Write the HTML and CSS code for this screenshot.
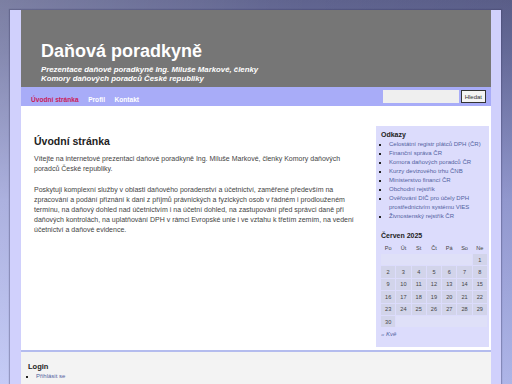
FILE: index.html
```html
<!DOCTYPE html>
<html lang="cs">
<head>
<meta charset="utf-8">
<title>Daňová poradkyně</title>
<link rel="stylesheet" href="styles.css">
</head>
<body>
<div class="page">
  <header class="header">
    <h1 class="site-title">Daňová poradkyně</h1>
    <p class="site-desc">Prezentace daňové poradkyně Ing. Miluše Markové, členky<br>Komory daňových poradců České republiky</p>
  </header>
  <nav class="nav">
    <ul class="menu">
      <li><a class="menu-link active" href="#">Úvodní stránka</a></li>
      <li><a class="menu-link" href="#">Profil</a></li>
      <li><a class="menu-link" href="#">Kontakt</a></li>
    </ul>
    <form class="search">
      <input class="search-input" type="text">
      <button class="search-btn" type="button">Hledat</button>
    </form>
  </nav>
  <div class="main">
    <div class="content">
      <h2 class="page-title">Úvodní stránka</h2>
      <p class="para">Vítejte na internetové prezentaci daňové poradkyně Ing. Miluše Markové, členky Komory daňových poradců České republiky.</p>
      <p class="para">Poskytuji komplexní služby v oblasti daňového poradenství a účetnictví, zaměřené především na zpracování a podání přiznání k dani z příjmů právnických a fyzických osob v řádném i prodlouženém termínu, na daňový dohled nad účetnictvím i na účetní dohled, na zastupování před správci daně při daňových kontrolách, na uplatňování DPH v rámci Evropské unie i ve vztahu k třetím zemím, na vedení účetnictví a daňové evidence.</p>
    </div>
    <aside class="sidebar">
      <h3 class="widget-title">Odkazy</h3>
      <ul class="links">
        <li><a href="#">Celostátní registr plátců DPH (ČR)</a></li>
        <li><a href="#">Finanční správa ČR</a></li>
        <li><a href="#">Komora daňových poradců ČR</a></li>
        <li><a href="#">Kurzy devizového trhu ČNB</a></li>
        <li><a href="#">Ministerstvo financí ČR</a></li>
        <li><a href="#">Obchodní rejstřík</a></li>
        <li><a href="#">Ověřování DIČ pro účely DPH prostřednictvím systému VIES</a></li>
        <li><a href="#">Živnostenský rejstřík ČR</a></li>
      </ul>
      <h3 class="widget-title cal-title">Červen 2025</h3>
      <table class="cal">
        <thead>
          <tr><th>Po</th><th>Út</th><th>St</th><th>Čt</th><th>Pá</th><th>So</th><th>Ne</th></tr>
        </thead>
        <tbody>
          <tr><td class="pad" colspan="6"></td><td>1</td></tr>
          <tr><td>2</td><td>3</td><td>4</td><td>5</td><td>6</td><td>7</td><td>8</td></tr>
          <tr><td>9</td><td>10</td><td>11</td><td>12</td><td>13</td><td>14</td><td>15</td></tr>
          <tr><td>16</td><td>17</td><td>18</td><td>19</td><td>20</td><td>21</td><td>22</td></tr>
          <tr><td>23</td><td>24</td><td>25</td><td>26</td><td>27</td><td>28</td><td>29</td></tr>
          <tr><td>30</td><td class="pad" colspan="6"></td></tr>
        </tbody>
      </table>
      <a class="prev" href="#">« Kvě</a>
    </aside>
  </div>
  <footer class="footer">
    <h3 class="widget-title">Login</h3>
    <ul class="links">
      <li><a href="#">Přihlásit se</a></li>
    </ul>
  </footer>
</div>
</body>
</html>
```
FILE: styles.css
```css
html, body {
  margin: 0;
  padding: 0;
}
body {
  height: 384px;
  overflow: hidden;
  background:
    linear-gradient(to right, rgba(255, 255, 255, 0.18), rgba(255, 255, 255, 0) 60%, rgba(0, 0, 30, 0.06)),
    linear-gradient(to bottom, #5f638e 0px, #6a6f9e 50px, #9aa0d8 200px, #b8c0f4 384px);
  font-family: "Liberation Sans", Arial, sans-serif;
  color: #333;
}
a {
  text-decoration: none;
}
.page {
  width: 470px;
  margin: 10px 0 0 10px;
  padding: 0 10px 0 11px;
  background: #d0d0fc;
  box-shadow: 0 0 1px 1px rgba(60, 60, 100, 0.35);
  height: 380px;
}
.header {
  height: 77px;
  background: #767676;
  padding: 0 20px 4px 20px;
  box-sizing: border-box;
  display: flex;
  flex-direction: column;
  justify-content: flex-end;
}
.site-title {
  margin: 0 0 4px 0;
  font-size: 18px;
  line-height: 20px;
  font-weight: bold;
  color: #fff;
}
.site-desc {
  margin: 0;
  font-size: 7.8px;
  line-height: 9px;
  font-weight: bold;
  font-style: italic;
  color: #fff;
}
.nav {
  height: 19px;
  background: #a8acf8;
  display: flex;
  align-items: center;
  justify-content: space-between;
  padding: 0 5px 0 10px;
}
.menu {
  list-style: none;
  margin: 0;
  padding: 0;
  display: flex;
  gap: 9.5px;
}
.menu-link {
  font-size: 6.6px;
  font-weight: bold;
  color: #fff;
}
.menu-link.active {
  color: #c8205a;
}
.search {
  display: flex;
  align-items: center;
  gap: 2px;
  margin: 0;
}
.search-input {
  width: 76px;
  height: 13px;
  box-sizing: border-box;
  border: none;
  background: #efefef;
  padding: 0;
  margin: 0;
}
.search-btn {
  height: 13px;
  box-sizing: border-box;
  border: 1px solid #333;
  background: #f4f4f4;
  font-family: "Liberation Sans", Arial, sans-serif;
  font-size: 6px;
  color: #333;
  padding: 0 3px;
  margin: 0;
}
.main {
  display: flex;
  background: #fff;
  height: 244px;
  border-bottom: 2px solid #b4bcee;
}
.content {
  flex: 1;
  padding: 29px 13px 0 13px;
}
.page-title {
  margin: 0 0 7px 0;
  font-size: 10.5px;
  line-height: 12px;
  font-weight: bold;
  color: #222;
}
.para {
  margin: 0 0 11px 0;
  font-size: 7px;
  line-height: 10px;
  color: #444;
}
.sidebar {
  width: 113px;
  margin: 20px 2px 3px 0;
  background: #dcdcfc;
  padding: 4px 4px 0 5px;
  box-sizing: border-box;
}
.widget-title {
  margin: 0;
  font-size: 7px;
  line-height: 9px;
  font-weight: bold;
  color: #222;
}
.links {
  margin: 1px 0 0 0;
  padding: 0 0 0 8px;
  list-style: square;
  font-size: 6px;
  line-height: 9px;
  color: #222;
}
.links a {
  color: #52629f;
}
.cal-title {
  margin-top: 10px;
}
.cal {
  border-collapse: separate;
  border-spacing: 1px;
  width: 108px;
  margin: 2px 0 0 -1px;
  font-size: 5.6px;
  color: #444;
  table-layout: fixed;
}
.cal th {
  font-weight: normal;
  height: 10px;
  padding: 0;
  text-align: center;
}
.cal td {
  background: #d2d4ea;
  height: 11.4px;
  padding: 0;
  text-align: center;
}
.cal td.pad {
  background: #dfe0f8;
}
.prev {
  display: block;
  margin-top: 3px;
  font-size: 6px;
  font-style: italic;
  color: #52629f;
}
.footer {
  background: #f3f3f3;
  padding: 10px 7px 0 7px;
  height: 40px;
}
.footer .widget-title {
  font-size: 7.5px;
}
```
